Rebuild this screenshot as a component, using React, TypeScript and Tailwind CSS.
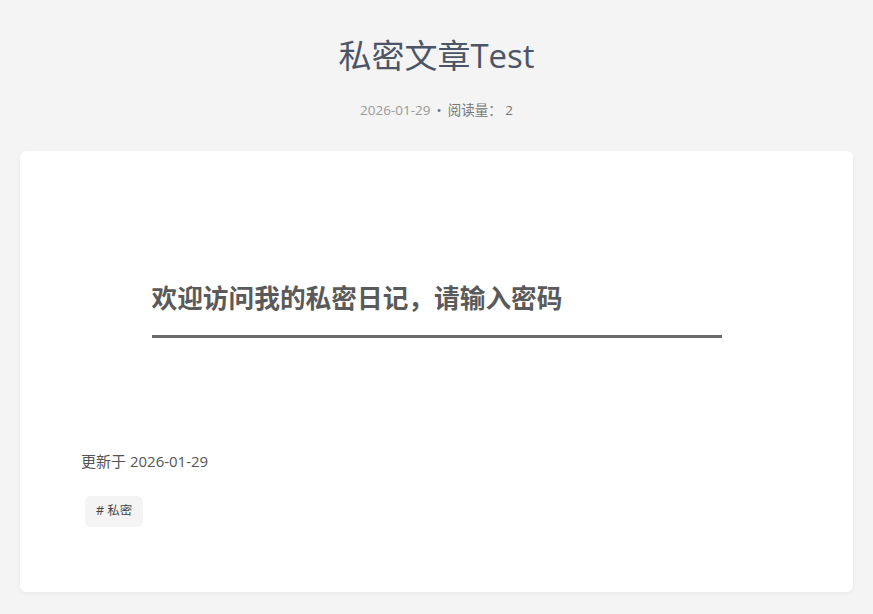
const font = { fontFamily: '"Open Sans", "Noto Sans CJK SC", sans-serif' }

const App = () => {
  return (
    <div className="min-h-screen bg-[#f4f4f4] px-5 pt-[30px] pb-[22px]" style={font}>
      <header className="flex flex-col items-center">
        <h1 className="text-[33px] leading-[52px] text-[#4c5566]">私密文章Test</h1>
        <div className="mt-[16px] flex items-center text-[13.5px] leading-[24px]">
          <span className="text-[#999]">2026-01-29</span>
          <span className="mx-[6px] text-[#777]">•</span>
          <span className="text-[#777]">阅读量： 2</span>
        </div>
      </header>

      <main className="mt-[29px] h-[441px] rounded-md bg-white shadow-[0_1px_4px_rgba(0,0,0,0.06)] px-[61px] pt-[128px]">
        <div className="mx-auto w-[570px]">
          <h2 className="text-[25.7px] leading-[40px] font-bold text-[#5a5a5a]">欢迎访问我的私密日记，请输入密码</h2>
          <input
            type="password"
            className="mt-[3px] block w-full h-[16px] border-b-[3px] border-[#6a6a6a] bg-transparent focus:outline-none"
          />
        </div>

        <p className="mt-[111px] text-[15px] leading-[24px] text-[#555]">更新于 2026-01-29</p>
        <div className="mt-[23px] ml-[4px] flex">
          <span className="flex h-[31px] items-center rounded-md bg-[#f4f4f4] px-[11px] text-[12.5px] text-[#444]">
            # 私密
          </span>
        </div>
      </main>
    </div>
  )
}

export default App
